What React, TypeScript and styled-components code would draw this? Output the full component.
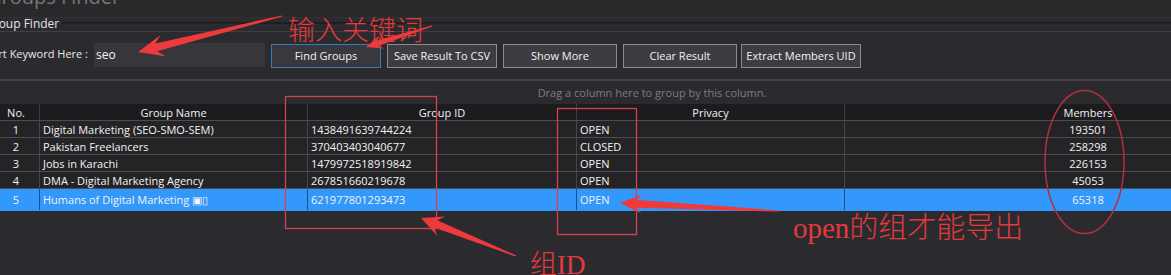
import React from "react";
import styled, { createGlobalStyle } from "styled-components";

const GlobalStyle = createGlobalStyle`
  html, body {
    margin: 0;
    padding: 0;
    background: #2b2b2f;
    width: 1171px;
    height: 275px;
    overflow: hidden;
  }
  #root {
    font-family: "Open Sans", "Noto Sans", sans-serif;
    font-size: 11px;
    color: #eeeeee;
  }
`;

const Window = styled.div`
  position: relative;
  width: 1171px;
  height: 275px;
  overflow: hidden;
  background: #2b2b2f;
`;

const TitleBar = styled.div`
  height: 17px;
  background: #29292c;
  border-bottom: 1px solid #313135;
  overflow: hidden;
`;

const TitleText = styled.div`
  margin: -13px 0 0 -13px;
  font-size: 20px;
  line-height: 20px;
  color: #77777b;
  white-space: nowrap;
`;

const Legend = styled.div`
  height: 13px;
  display: flex;
  align-items: flex-start;
  border-bottom: 1px solid #3f3f44;
`;

const LegendText = styled.span`
  margin: -1px 0 0 -15px;
  font-size: 12px;
  line-height: 13px;
  color: #e4e4e4;
  white-space: nowrap;
`;

const LegendLine = styled.div`
  flex: 1;
  height: 2px;
  margin: 4px 0 0 3px;
  background: #1f1f22;
`;

const Controls = styled.div`
  height: 49px;
  display: flex;
  align-items: center;
  box-sizing: border-box;
  border-bottom: 2px solid #404045;
`;

const KeywordLabel = styled.div`
  width: 88px;
  display: flex;
  justify-content: flex-end;
  white-space: nowrap;
  font-size: 11px;
  color: #e8e8e8;
  margin-right: 6px;
  margin-top: -4px;
`;

const KeywordInput = styled.input`
  width: 171px;
  height: 24px;
  box-sizing: border-box;
  margin: -2px 6px 0 0;
  padding: 0 2px;
  border: none;
  outline: none;
  background: #37373b;
  color: #f4f4f4;
  font-family: "Open Sans", "Noto Sans", sans-serif;
  font-size: 12px;
`;

const Button = styled.div<{ $w: number; $primary?: boolean; $ml?: number }>`
  width: ${(p) => p.$w}px;
  height: 24px;
  box-sizing: border-box;
  margin-left: ${(p) => p.$ml ?? 0}px;
  margin-right: 6px;
  display: flex;
  align-items: center;
  justify-content: center;
  background: ${(p) => (p.$primary ? "#39393d" : "#3d3d41")};
  border: 1px solid ${(p) => (p.$primary ? "#2f7cc2" : "#8b8b8e")};
  color: #f2f2f2;
  font-size: 11px;
  white-space: nowrap;
`;

const GroupPanel = styled.div`
  width: 1304px;
  height: 23px;
  display: flex;
  align-items: center;
  justify-content: center;
  color: #7c7c80;
  font-size: 11px;
`;

const Table = styled.div`
  width: 1331px;
`;

const RowGrid = styled.div<{ $h: number; $header?: boolean; $selected?: boolean }>`
  display: grid;
  grid-template-columns: 40px 268px 269px 268px 486px;
  height: ${(p) => p.$h}px;
  box-sizing: border-box;
  background: ${(p) => (p.$header ? "#1c1c1f" : p.$selected ? "#3398fb" : "#242427")};
  border-bottom: 1px solid ${(p) => (p.$selected ? "#3398fb" : "#4d4d51")};
`;

const Cell = styled.div<{ $align?: "left" | "center"; $pr?: number; $sep?: string; $last?: boolean }>`
  display: flex;
  align-items: center;
  justify-content: ${(p) => (p.$align === "left" ? "flex-start" : "center")};
  padding-left: ${(p) => (p.$align === "left" ? 3 : 0)}px;
  padding-right: ${(p) => p.$pr ?? 0}px;
  border-right: ${(p) => (p.$last ? "none" : `1px solid ${p.$sep ?? "#46464a"}`)};
  white-space: nowrap;
  overflow: hidden;
  color: #f2f2f2;
  font-size: 11px;
`;

const Overlay = styled.div`
  position: absolute;
  inset: 0;
  pointer-events: none;
`;

const Note = styled.span<{ $x: number; $y: number; $size: number }>`
  position: absolute;
  left: ${(p) => p.$x}px;
  top: ${(p) => p.$y}px;
  font-family: "Liberation Serif", "Noto Sans CJK SC", serif;
  font-size: ${(p) => p.$size}px;
  font-weight: 300;
  line-height: 1;
  color: #e23a3d;
  white-space: nowrap;
`;

type Row = { no: number; name: string; id: string; privacy: string; members: string };

const rows: Row[] = [
  { no: 1, name: "Digital Marketing (SEO-SMO-SEM)", id: "1438491639744224", privacy: "OPEN", members: "193501" },
  { no: 2, name: "Pakistan Freelancers", id: "370403403040677", privacy: "CLOSED", members: "258298" },
  { no: 3, name: "Jobs in Karachi", id: "1479972518919842", privacy: "OPEN", members: "226153" },
  { no: 4, name: "DMA - Digital Marketing Agency", id: "267851660219678", privacy: "OPEN", members: "45053" },
  { no: 5, name: "Humans of Digital Marketing \u25A3\u25AF", id: "621977801293473", privacy: "OPEN", members: "65318" },
];

function arrowPoints(
  tx: number,
  ty: number,
  px: number,
  py: number,
  headLen: number,
  headW: number,
  shaftW: number
): string {
  const dx = px - tx;
  const dy = py - ty;
  const L = Math.hypot(dx, dy);
  const ux = dx / L;
  const uy = dy / L;
  const nx = -uy;
  const ny = ux;
  const jx = px - ux * headLen * 0.72;
  const jy = py - uy * headLen * 0.72;
  const bx = px - ux * headLen;
  const by = py - uy * headLen;
  const pts: [number, number][] = [
    [tx + nx * 0.6, ty + ny * 0.6],
    [jx + (nx * shaftW) / 2, jy + (ny * shaftW) / 2],
    [bx + (nx * headW) / 2, by + (ny * headW) / 2],
    [px, py],
    [bx - (nx * headW) / 2, by - (ny * headW) / 2],
    [jx - (nx * shaftW) / 2, jy - (ny * shaftW) / 2],
    [tx - nx * 0.6, ty - ny * 0.6],
  ];
  return pts.map(([x, y]) => `${x.toFixed(1)},${y.toFixed(1)}`).join(" ");
}

const Annotations: React.FC = () => (
  <Overlay>
    <svg width="1171" height="275" viewBox="0 0 1171 275">
      <g fill="none" strokeWidth="1.3">
        <rect x="285.5" y="96.5" width="151" height="132" stroke="#d8404e" />
        <rect x="557.5" y="108.5" width="79" height="126" stroke="#d8404e" />
        <ellipse cx="1084.5" cy="162" rx="39.5" ry="71.5" stroke="#b3303e" strokeWidth="1.5" />
      </g>
      <g fill="#ef3a3b">
        <polygon points={arrowPoints(282, 16, 138, 52, 26, 22, 8)} />
        <polygon points={arrowPoints(432, 26, 366, 47, 17, 14, 6)} />
        <polygon points={arrowPoints(779, 211, 620, 203, 22, 19, 8)} />
        <polygon points={arrowPoints(516, 256, 421, 218, 22, 21, 8)} />
      </g>
    </svg>
    <Note $x={288} $y={18} $size={27}>输入关键词</Note>
    <Note $x={530} $y={252} $size={27}>组ID</Note>
    <Note $x={793} $y={214} $size={29}>open的组才能导出</Note>
  </Overlay>
);

export default function App() {
  return (
    <>
      <GlobalStyle />
      <Window>
        <TitleBar>
          <TitleText>Groups Finder</TitleText>
        </TitleBar>
        <Legend>
          <LegendText>Group Finder</LegendText>
          <LegendLine />
        </Legend>
        <Controls>
          <KeywordLabel>
            <span>Insert Keyword Here :</span>
          </KeywordLabel>
          <KeywordInput value="seo" readOnly />
          <Button $w={110} $primary>Find Groups</Button>
          <Button $w={110}>Save Result To CSV</Button>
          <Button $w={114}>Show More</Button>
          <Button $w={114}>Clear Result</Button>
          <Button $w={120} $ml={-2}>Extract Members UID</Button>
        </Controls>
        <GroupPanel>Drag a column here to group by this column.</GroupPanel>
        <Table>
          <RowGrid $h={17} $header>
            <Cell $pr={7} $sep="#3e3e42">No.</Cell>
            <Cell $sep="#3e3e42">Group Name</Cell>
            <Cell $sep="#3e3e42">Group ID</Cell>
            <Cell $sep="#3e3e42">Privacy</Cell>
            <Cell $last>Members</Cell>
          </RowGrid>
          {rows.map((r) => {
            const sel = r.no === 5;
            const sep = sel ? "#1d4f86" : "#46464a";
            return (
              <RowGrid key={r.no} $h={sel ? 22 : 17} $selected={sel}>
                <Cell $pr={7} $sep={sep}>{r.no}</Cell>
                <Cell $align="left" $sep={sep}>{r.name}</Cell>
                <Cell $align="left" $sep={sep}>{r.id}</Cell>
                <Cell $align="left" $sep={sep}>{r.privacy}</Cell>
                <Cell $last>{r.members}</Cell>
              </RowGrid>
            );
          })}
        </Table>
        <Annotations />
      </Window>
    </>
  );
}
